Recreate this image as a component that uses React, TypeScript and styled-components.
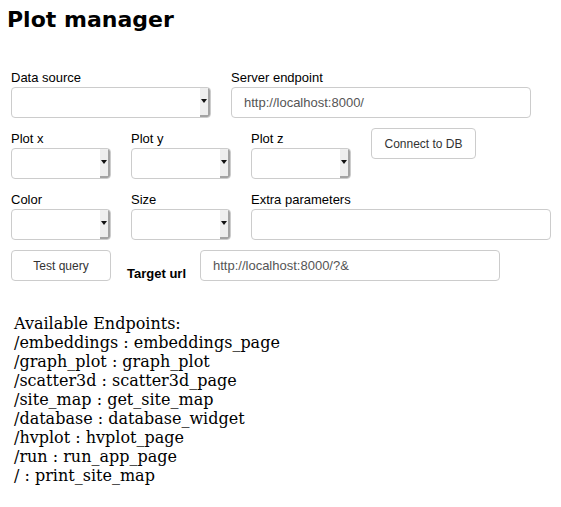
import React from "react";
import styled, { createGlobalStyle } from "styled-components";

const Global = createGlobalStyle`
  html, body { margin: 0; padding: 0; background: #ffffff; }
  body { font-family: "Liberation Sans", Arial, sans-serif; color: #000; }
`;

const Page = styled.div`
  display: flex;
  flex-direction: column;
  align-items: flex-start;
`;

const Title = styled.h1`
  margin: 7px 0 29px 7px;
  font-family: "DejaVu Sans", sans-serif;
  font-weight: bold;
  font-size: 22px;
  line-height: 26px;
  color: #000;
`;

const Row = styled.div`
  display: flex;
  align-items: flex-start;
  margin-left: 1px;
`;

const Field = styled.div<{ $w: number }>`
  display: flex;
  flex-direction: column;
  width: ${(p) => p.$w}px;
  margin: 5px 10px;
`;

const Label = styled.div`
  margin-top: 3px;
  margin-bottom: 2px;
  font-size: 13px;
  line-height: 15px;
  color: #000;
  white-space: nowrap;
`;

const Control = styled.div`
  box-sizing: border-box;
  height: 31px;
  border: 1px solid #cccccc;
  border-radius: 4px;
  background: #ffffff;
  display: flex;
  align-items: center;
  padding: 0 12px;
  font-size: 13px;
  color: #555555;
  white-space: nowrap;
  overflow: hidden;
`;

const SelectBox = styled(Control)`
  position: relative;
`;

const ArrowStrip = styled.div`
  position: absolute;
  top: 0;
  right: 0;
  bottom: 0;
  width: 10px;
  background: #eeeeee;
  box-shadow: inset -2px -2px 0 #a3a3a3;
  display: flex;
  align-items: center;
  justify-content: center;
  padding-right: 2px;
  padding-bottom: 3px;
  box-sizing: border-box;
`;

const Triangle = styled.div`
  width: 0;
  height: 0;
  border-left: 3px solid transparent;
  border-right: 3px solid transparent;
  border-top: 4px solid #111;
`;

const Button = styled.button<{ $w: number }>`
  box-sizing: border-box;
  width: ${(p) => p.$w}px;
  height: 31px;
  margin: 5px 10px;
  border: 1px solid #cccccc;
  border-radius: 4px;
  background: #ffffff;
  font-family: "Liberation Sans", Arial, sans-serif;
  font-size: 12px;
  color: #333333;
  padding: 0;
  display: flex;
  align-items: center;
  justify-content: center;
`;

const TargetLabel = styled.div`
  margin: 21px 3px 0 6px;
  width: 60px;
  font-size: 13px;
  line-height: 15px;
  font-weight: bold;
  white-space: nowrap;
`;

const TextInputBox = styled(Control)<{ $w: number }>`
  width: ${(p) => p.$w}px;
  margin: 5px 10px;
`;

const Endpoints = styled.div`
  margin: 28px 0 0 14px;
  font-family: "DejaVu Serif", serif;
  font-size: 16px;
  line-height: normal;
  color: #000;
`;

const Select = () => (
  <SelectBox>
    <ArrowStrip>
      <Triangle />
    </ArrowStrip>
  </SelectBox>
);

const endpoints = [
  "Available Endpoints:",
  "/embeddings : embeddings_page",
  "/graph_plot : graph_plot",
  "/scatter3d : scatter3d_page",
  "/site_map : get_site_map",
  "/database : database_widget",
  "/hvplot : hvplot_page",
  "/run : run_app_page",
  "/ : print_site_map",
];

export default function App() {
  return (
    <Page>
      <Global />
      <Title>Plot manager</Title>
      <Row>
        <Field $w={200}>
          <Label>Data source</Label>
          <Select />
        </Field>
        <Field $w={300}>
          <Label>Server endpoint</Label>
          <Control>http://localhost:8000/</Control>
        </Field>
      </Row>
      <Row>
        <Field $w={100}>
          <Label>Plot x</Label>
          <Select />
        </Field>
        <Field $w={100}>
          <Label>Plot y</Label>
          <Select />
        </Field>
        <Field $w={100}>
          <Label>Plot z</Label>
          <Select />
        </Field>
        <Button $w={105}>Connect to DB</Button>
      </Row>
      <Row>
        <Field $w={100}>
          <Label>Color</Label>
          <Select />
        </Field>
        <Field $w={100}>
          <Label>Size</Label>
          <Select />
        </Field>
        <Field $w={300}>
          <Label>Extra parameters</Label>
          <Control />
        </Field>
      </Row>
      <Row>
        <Button $w={100}>Test query</Button>
        <TargetLabel>Target url</TargetLabel>
        <TextInputBox $w={300}>http://localhost:8000/?&amp;</TextInputBox>
      </Row>
      <Endpoints>
        {endpoints.map((e) => (
          <div key={e}>{e}</div>
        ))}
      </Endpoints>
    </Page>
  );
}
